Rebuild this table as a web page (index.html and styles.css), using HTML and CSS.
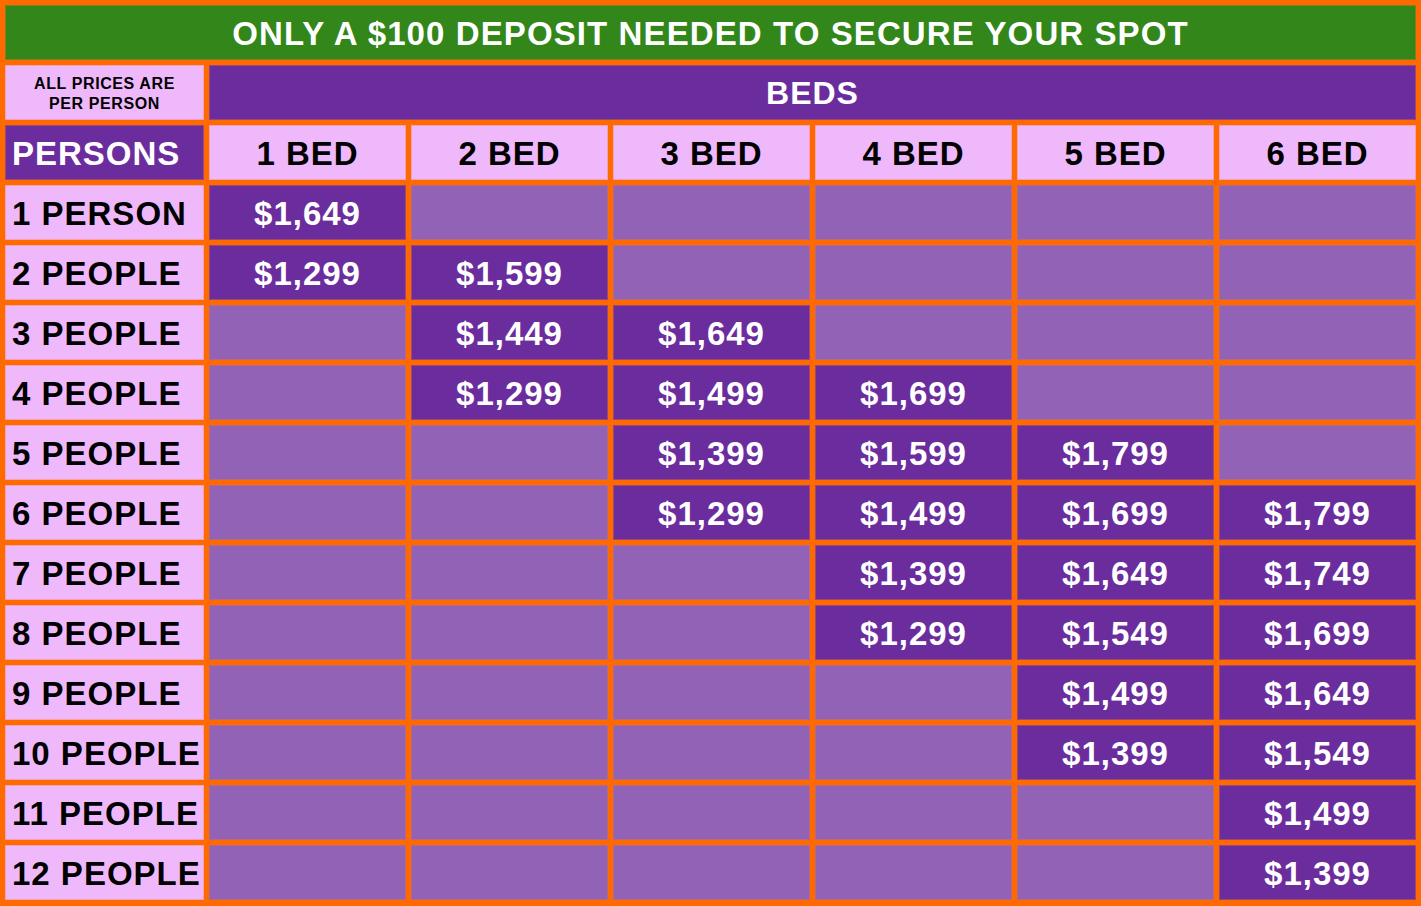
FILE: index.html
```html
<!DOCTYPE html>
<html lang="en">
<head>
<meta charset="utf-8">
<title>Pricing</title>
<link rel="stylesheet" href="styles.css">
</head>
<body>
<div class="grid">
  <div class="cell title">ONLY A $100 DEPOSIT NEEDED TO SECURE YOUR SPOT</div>

  <div class="cell note">ALL PRICES ARE<br>PER PERSON</div>
  <div class="cell beds">BEDS</div>

  <div class="cell persons">PERSONS</div>
  <div class="cell head">1 BED</div>
  <div class="cell head">2 BED</div>
  <div class="cell head">3 BED</div>
  <div class="cell head">4 BED</div>
  <div class="cell head">5 BED</div>
  <div class="cell head">6 BED</div>

  <div class="cell label">1 PERSON</div>
  <div class="cell price">$1,649</div><div class="cell empty"></div><div class="cell empty"></div><div class="cell empty"></div><div class="cell empty"></div><div class="cell empty"></div>

  <div class="cell label">2 PEOPLE</div>
  <div class="cell price">$1,299</div><div class="cell price">$1,599</div><div class="cell empty"></div><div class="cell empty"></div><div class="cell empty"></div><div class="cell empty"></div>

  <div class="cell label">3 PEOPLE</div>
  <div class="cell empty"></div><div class="cell price">$1,449</div><div class="cell price">$1,649</div><div class="cell empty"></div><div class="cell empty"></div><div class="cell empty"></div>

  <div class="cell label">4 PEOPLE</div>
  <div class="cell empty"></div><div class="cell price">$1,299</div><div class="cell price">$1,499</div><div class="cell price">$1,699</div><div class="cell empty"></div><div class="cell empty"></div>

  <div class="cell label">5 PEOPLE</div>
  <div class="cell empty"></div><div class="cell empty"></div><div class="cell price">$1,399</div><div class="cell price">$1,599</div><div class="cell price">$1,799</div><div class="cell empty"></div>

  <div class="cell label">6 PEOPLE</div>
  <div class="cell empty"></div><div class="cell empty"></div><div class="cell price">$1,299</div><div class="cell price">$1,499</div><div class="cell price">$1,699</div><div class="cell price">$1,799</div>

  <div class="cell label">7 PEOPLE</div>
  <div class="cell empty"></div><div class="cell empty"></div><div class="cell empty"></div><div class="cell price">$1,399</div><div class="cell price">$1,649</div><div class="cell price">$1,749</div>

  <div class="cell label">8 PEOPLE</div>
  <div class="cell empty"></div><div class="cell empty"></div><div class="cell empty"></div><div class="cell price">$1,299</div><div class="cell price">$1,549</div><div class="cell price">$1,699</div>

  <div class="cell label">9 PEOPLE</div>
  <div class="cell empty"></div><div class="cell empty"></div><div class="cell empty"></div><div class="cell empty"></div><div class="cell price">$1,499</div><div class="cell price">$1,649</div>

  <div class="cell label">10 PEOPLE</div>
  <div class="cell empty"></div><div class="cell empty"></div><div class="cell empty"></div><div class="cell empty"></div><div class="cell price">$1,399</div><div class="cell price">$1,549</div>

  <div class="cell label">11 PEOPLE</div>
  <div class="cell empty"></div><div class="cell empty"></div><div class="cell empty"></div><div class="cell empty"></div><div class="cell empty"></div><div class="cell price">$1,499</div>

  <div class="cell label">12 PEOPLE</div>
  <div class="cell empty"></div><div class="cell empty"></div><div class="cell empty"></div><div class="cell empty"></div><div class="cell empty"></div><div class="cell price">$1,399</div>
</div>
</body>
</html>
```

FILE: styles.css
```css
html, body {
  margin: 0;
  padding: 0;
  background: #ff6a00;
}

body {
  font-family: "Liberation Sans", Arial, Helvetica, sans-serif;
  font-weight: bold;
}

.grid {
  width: 1421px;
  height: 906px;
  box-sizing: border-box;
  padding: 5px 5px 6px 5px;
  display: grid;
  grid-template-columns: 199px repeat(6, 1fr);
  grid-template-rows: repeat(15, 55px);
  gap: 5px;
  background: #ff6a00;
}

.cell {
  display: flex;
  align-items: center;
  justify-content: center;
  font-size: 33px;
  letter-spacing: 1px;
  line-height: 1;
  box-sizing: border-box;
  border: 1px solid rgba(255, 120, 40, 0.35);
  padding-top: 1px;
}

.title {
  grid-column: 1 / -1;
  background: #33861a;
  color: #ffffff;
  font-size: 33px;
  letter-spacing: 1.1px;
  padding-top: 2px;
}

.note {
  background: #efb8fb;
  color: #000000;
  font-size: 16px;
  letter-spacing: 0.6px;
  line-height: 20px;
  text-align: center;
  padding-top: 2px;
}

.beds {
  grid-column: 2 / -1;
  background: #6b2d9d;
  color: #ffffff;
  font-size: 32px;
  letter-spacing: 1px;
}

.persons {
  background: #6b2d9d;
  color: #ffffff;
  justify-content: flex-start;
  padding-left: 6px;
}

.head {
  background: #efb8fb;
  color: #000000;
}

.label {
  background: #efb8fb;
  color: #000000;
  justify-content: flex-start;
  padding-left: 6px;
}

.price {
  background: #6b2d9d;
  color: #ffffff;
}

.empty {
  background: #9162b5;
}
```
